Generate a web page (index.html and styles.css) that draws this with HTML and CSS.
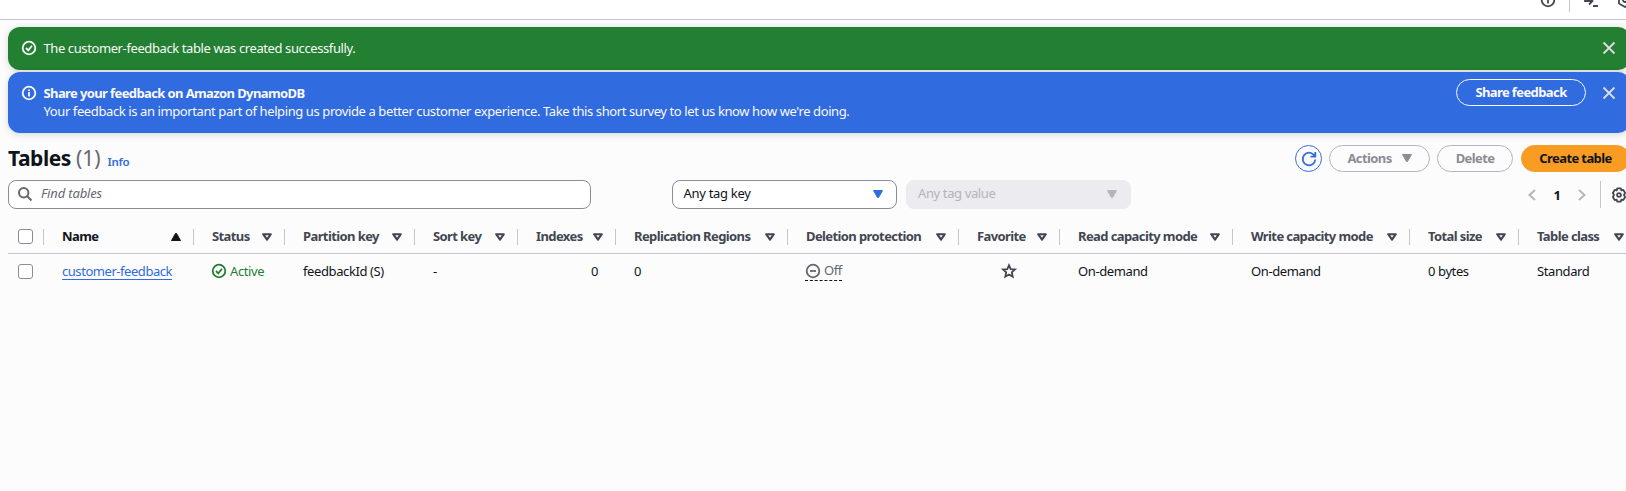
FILE: index.html
```html
<!DOCTYPE html>
<html lang="en">
<head>
<meta charset="utf-8">
<title>Tables | DynamoDB</title>
<link rel="stylesheet" href="styles.css">
</head>
<body>
<svg class="defs" aria-hidden="true">
  <symbol id="sort" viewBox="0 0 10 8"><path d="M1.200 1.200h7.600L5 6.700z" fill="none" stroke="currentColor" stroke-width="2.100" stroke-linejoin="round"/></symbol>
  <symbol id="down" viewBox="0 0 10 8"><path d="M.5.5h9L5.500 7.500h-1z" fill="currentColor" stroke="currentColor" stroke-linejoin="round"/></symbol>
  <symbol id="close" viewBox="0 0 16 16"><path d="M2.500 2.500l11 11m0-11l-11 11" fill="none" stroke="currentColor" stroke-width="1.800"/></symbol>
  <symbol id="ok" viewBox="0 0 16 16"><circle cx="8" cy="8" r="6.300"/><path d="M5 8l2.300 2.300L11 5.800"/></symbol>
  <symbol id="info" viewBox="0 0 16 16"><circle cx="8" cy="8" r="6.300"/><path d="M8 11.500V7M8 6V4.500"/></symbol>
  <symbol id="gear" viewBox="0 0 16 16"><path d="M6.200 1.400h3.600l.5 1.900 2-.4 1.900 3L13 8l1.200 2.100-1.900 3-2-.4-.5 1.900H6.200l-.5-1.900-2 .4-1.900-3L3 8 1.800 5.900l1.900-3 2 .4z" stroke-linejoin="round"/><circle cx="8" cy="8" r="1.900"/></symbol>
</svg>
<header class="topbar">
  <svg class="icon top-info"><use href="#info"/></svg>
  <span class="top-divider"></span>
  <svg class="icon top-shell" viewBox="0 0 16 16"><path d="M2 3v6h7M6 5.500L9.500 9 6 12.500M10 14h5"/></svg>
  <svg class="icon top-gear" viewBox="0 0 16 16"><path d="M8 1l6 3.500v7L8 15l-6-3.500v-7z"/><circle cx="8" cy="8" r="2"/></svg>
</header>
<main class="page">
  <section class="flash success">
    <svg class="icon"><use href="#ok"/></svg>
    <p class="message">The customer-feedback table was created successfully.</p>
    <svg class="close"><use href="#close"/></svg>
  </section>
  <section class="flash notice">
    <svg class="icon"><use href="#info"/></svg>
    <div class="message"><strong class="notice-title">Share your feedback on Amazon DynamoDB</strong><p class="notice-text">Your feedback is an important part of helping us provide a better customer experience. Take this short survey to let us know how we're doing.</p></div>
    <button class="btn share">Share feedback</button>
    <svg class="close"><use href="#close"/></svg>
  </section>
  <div class="heading">
    <h1><span class="h-title">Tables</span> <span class="count">(1)</span></h1>
    <a class="info-link">Info</a>
    <div class="actions">
      <button class="btn refresh"><svg viewBox="0 0 16 16"><path d="M14.300 8.500A6.300 6.300 0 1 1 12.800 3.900L14 5.300M14.300 1v4.700H9.500"/></svg></button>
      <button class="btn disabled act"><span>Actions</span><svg class="tri"><use href="#down"/></svg></button>
      <button class="btn disabled del">Delete</button>
      <button class="btn primary">Create table</button>
    </div>
  </div>
  <div class="filters">
    <div class="field search"><svg viewBox="0 0 16 16"><circle cx="6.700" cy="6.700" r="4.700"/><path d="M10.200 10.200L14.500 14.500"/></svg><span>Find tables</span></div>
    <div class="field key"><span>Any tag key</span><svg class="tri"><use href="#down"/></svg></div>
    <div class="field value"><span>Any tag value</span><svg class="tri"><use href="#down"/></svg></div>
    <div class="pager">
      <svg class="chev" viewBox="0 0 8 12"><path d="M7 1L1.500 6 7 11"/></svg>
      <b>1</b>
      <svg class="chev" viewBox="0 0 8 12"><path d="M1 1l5.500 5L1 11"/></svg>
      <span class="pager-divider"></span>
      <svg class="icon"><use href="#gear"/></svg>
    </div>
  </div>
  <div class="grid head">
    <div class="cell check"><span class="box"></span></div>
    <div class="cell sorted"><span>Name</span><svg class="tri up"><use href="#down"/></svg></div>
    <div class="cell"><span>Status</span><svg class="tri"><use href="#sort"/></svg></div>
    <div class="cell"><span>Partition key</span><svg class="tri"><use href="#sort"/></svg></div>
    <div class="cell"><span>Sort key</span><svg class="tri"><use href="#sort"/></svg></div>
    <div class="cell"><span>Indexes</span><svg class="tri"><use href="#sort"/></svg></div>
    <div class="cell"><span>Replication Regions</span><svg class="tri"><use href="#sort"/></svg></div>
    <div class="cell"><span>Deletion protection</span><svg class="tri"><use href="#sort"/></svg></div>
    <div class="cell"><span>Favorite</span><svg class="tri"><use href="#sort"/></svg></div>
    <div class="cell"><span>Read capacity mode</span><svg class="tri"><use href="#sort"/></svg></div>
    <div class="cell"><span>Write capacity mode</span><svg class="tri"><use href="#sort"/></svg></div>
    <div class="cell"><span>Total size</span><svg class="tri"><use href="#sort"/></svg></div>
    <div class="cell"><span>Table class</span><svg class="tri"><use href="#sort"/></svg></div>
  </div>
  <div class="grid row">
    <div class="cell check"><span class="box"></span></div>
    <div class="cell"><a class="link">customer-feedback</a></div>
    <div class="cell"><span class="active"><svg class="icon"><use href="#ok"/></svg>Active</span></div>
    <div class="cell">feedbackId (S)</div>
    <div class="cell">-</div>
    <div class="cell num">0</div>
    <div class="cell">0</div>
    <div class="cell"><span class="off"><svg class="icon" viewBox="0 0 16 16"><circle cx="8" cy="8" r="6.300"/><path d="M5 8h6"/></svg>Off</span></div>
    <div class="cell fav"><svg class="icon" viewBox="0 0 16 16"><path d="M8 2.200l1.700 3.900 4.300.4-3.200 2.900.9 4.300L8 11.500l-3.700 2.200.9-4.300L2 6.500l4.300-.4z"/></svg></div>
    <div class="cell">On-demand</div>
    <div class="cell">On-demand</div>
    <div class="cell">0 bytes</div>
    <div class="cell">Standard</div>
  </div>
</main>
</body>
</html>
```
FILE: styles.css
```css
* { box-sizing: border-box; }
html, body { margin: 0; height: 491px; overflow: hidden; }
body { background: #fcfcfd; color: #0f141a; font: 13px/18px "Noto Sans", "Open Sans", sans-serif; letter-spacing: -0.39px; }
p, h1 { margin: 0; }
.defs { position: absolute; width: 0; height: 0; }
svg { flex: none; overflow: visible; }
.icon { width: 16px; height: 16px; fill: none; stroke: currentColor; stroke-width: 1.800; }
.topbar { display: flex; width: 1640px; height: 20px; padding-left: 1540px; background: #fff; border-bottom: 1px solid #c6c6cd; color: #424650; }
.top-info { margin-top: -8px; }
.top-divider { width: 1px; height: 12px; margin: 0 13px; background: #c6c6cd; }
.top-shell { margin-top: -8px; }
.top-gear { margin: -8px 0 0 18px; }
.page { width: 1630px; padding: 7px 0 0 8px; }
.flash { display: flex; align-items: flex-start; width: 1622px; border-radius: 12px; color: #f9f9fa; box-shadow: 0 0 6px rgba(0, 7, 22, .08), 0 3px 8px rgba(0, 7, 22, .08); }
.flash .icon { margin: 0 6.500px 0 13px; }
.flash .message { flex: 1; letter-spacing: -0.4px; }
.close { width: 16px; height: 16px; margin-right: 13px; color: #dedee3; }
.success { height: 43px; padding-top: 13px; background: #237f31; }
.success .message { line-height: 17px; }
.notice { height: 61px; margin-top: 2px; padding-top: 13px; background: #316be0; }
.notice .message { margin-top: -1px; }
.notice-title, .notice-text { display: block; line-height: 18px; }
.notice-title { font-weight: 700; letter-spacing: -0.61px; }
.btn { display: flex; align-items: center; justify-content: center; height: 27px; padding: 0 0 2px; border: 1px solid #b4b4bb; border-radius: 14px; background: transparent; color: #8c8c94; font: bold 13px/18px "Noto Sans", "Open Sans", sans-serif; letter-spacing: -0.6px; }
.share { width: 130px; margin: -6px 15px 0 0; border-color: #f9f9fa; color: #f9f9fa; }
.heading { display: flex; height: 39px; margin-top: 12px; }
h1 { font-size: 21px; line-height: 26px; letter-spacing: -0.45px; }
.count { font-weight: 400; letter-spacing: 0; color: #656871; }
.info-link { margin: 8px 0 0 7px; font-size: 11.5px; font-weight: 600; letter-spacing: -0.3px; color: #316be0; }
.actions { display: flex; margin-left: auto; }
.refresh { width: 27px; padding: 0; border-color: #316be0; margin-right: 7px; }
.refresh svg { width: 16px; height: 16px; fill: none; stroke: #316be0; stroke-width: 1.800; }
.act { width: 101px; gap: 10px; margin-right: 7px; }
.del { width: 76px; margin-right: 8px; }
.primary { width: 109px; border-color: #f89c24; background: #f89c24; color: #0f141a; }
.tri { width: 10px; height: 8px; }
.filters { display: flex; height: 29px; margin-top: -4px; }
.field { display: flex; align-items: center; justify-content: space-between; height: 29px; padding: 0 13px 1px 11px; border: 1px solid #8c8c94; border-radius: 8px; background: #fff; }
.field span { margin-top: -2px; }
.search { width: 583px; margin-right: 81px; justify-content: flex-start; gap: 8px; padding-left: 8px; color: #656871; font-style: italic; letter-spacing: -0.15px; }
.search svg { width: 16px; height: 16px; fill: none; stroke: #656871; stroke-width: 2; }
.key { width: 225px; margin-right: 9px; padding-left: 10.500px; letter-spacing: -0.3px; }
.key .tri { color: #316be0; }
.value { width: 225px; border-color: #ebebf0; background: #ebebf0; color: #b4b4bb; letter-spacing: -0.38px; }
.pager { display: flex; align-items: center; margin-left: auto; padding-right: 3px; color: #424650; }
.pager b { width: 42px; text-align: center; color: #0f141a; }
.chev { width: 8px; height: 12px; fill: none; stroke: #b4b4bb; stroke-width: 1.900; }
.pager-divider { width: 1px; height: 27px; margin: 0 10px 0 14px; background: #c6c6cd; }
.grid { display: grid; grid-template-columns: 36px 150px 91px 130px 103px 98px 172px 171px 101px 173px 177px 109px 111px; }
.cell { display: flex; align-items: center; padding-left: 18px; white-space: nowrap; }
.check { padding-left: 10px; }
.box { flex: none; width: 15px; height: 15px; border: 1px solid #8c8c94; border-radius: 3px; background: #fff; }
.head { height: 45px; padding-top: 20px; padding-bottom: 8px; border-bottom: 1px solid #c6c6cd; font-weight: 700; letter-spacing: -0.6px; color: #424650; }
.head .cell { height: 16px; justify-content: space-between; padding-right: 12px; border-right: 1px solid #c6c6cd; }
.head .cell span { margin-top: -2px; }
.head .check { padding-right: 9px; }
.head .cell:last-child { padding-right: 6px; border-right: 0; }
.head .sorted { color: #0f141a; }
.up { transform: rotate(180deg); }
.row { height: 34px; }
.link { margin-top: 1px; color: #316be0; border-bottom: 1px solid #316be0; line-height: 16px; letter-spacing: -0.45px; }
.active { display: flex; align-items: center; gap: 3px; margin-left: -1px; color: #237f31; }
.num { justify-content: flex-end; padding-right: 18px; }
.off { display: flex; align-items: center; gap: 3px; margin-left: -1px; line-height: 19px; color: #656871; border-bottom: 1px dashed #0f141a; }
.fav { padding-left: 42px; color: #424650; }
```
